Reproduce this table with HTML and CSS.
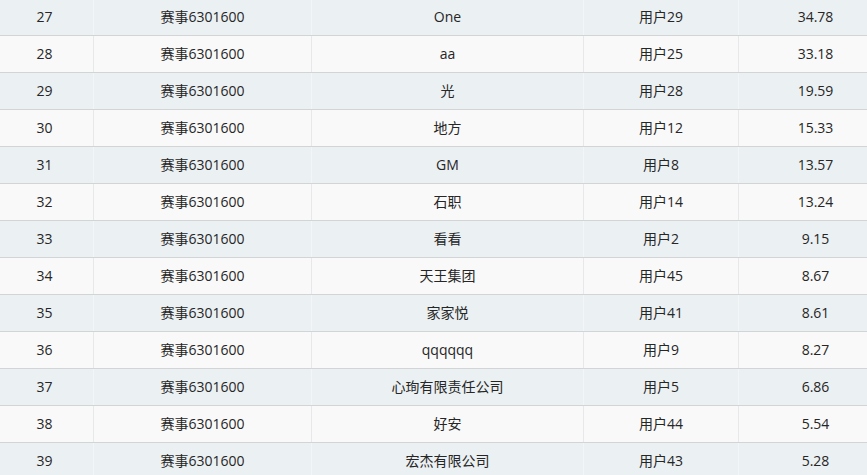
FILE: index.html
```html
<!DOCTYPE html>
<html lang="zh">
<head>
<meta charset="utf-8">
<title>排行</title>
<link rel="stylesheet" href="styles.css">
</head>
<body>
<div class="table">
  <div class="row odd"><div class="cell">27</div><div class="cell">赛事6301600</div><div class="cell">One</div><div class="cell">用户29</div><div class="cell">34.78</div></div>
  <div class="row even"><div class="cell">28</div><div class="cell">赛事6301600</div><div class="cell">aa</div><div class="cell">用户25</div><div class="cell">33.18</div></div>
  <div class="row odd"><div class="cell">29</div><div class="cell">赛事6301600</div><div class="cell">光</div><div class="cell">用户28</div><div class="cell">19.59</div></div>
  <div class="row even"><div class="cell">30</div><div class="cell">赛事6301600</div><div class="cell">地方</div><div class="cell">用户12</div><div class="cell">15.33</div></div>
  <div class="row odd"><div class="cell">31</div><div class="cell">赛事6301600</div><div class="cell">GM</div><div class="cell">用户8</div><div class="cell">13.57</div></div>
  <div class="row even"><div class="cell">32</div><div class="cell">赛事6301600</div><div class="cell">石职</div><div class="cell">用户14</div><div class="cell">13.24</div></div>
  <div class="row odd"><div class="cell">33</div><div class="cell">赛事6301600</div><div class="cell">看看</div><div class="cell">用户2</div><div class="cell">9.15</div></div>
  <div class="row even"><div class="cell">34</div><div class="cell">赛事6301600</div><div class="cell">天王集团</div><div class="cell">用户45</div><div class="cell">8.67</div></div>
  <div class="row odd"><div class="cell">35</div><div class="cell">赛事6301600</div><div class="cell">家家悦</div><div class="cell">用户41</div><div class="cell">8.61</div></div>
  <div class="row even"><div class="cell">36</div><div class="cell">赛事6301600</div><div class="cell">qqqqqq</div><div class="cell">用户9</div><div class="cell">8.27</div></div>
  <div class="row odd"><div class="cell">37</div><div class="cell">赛事6301600</div><div class="cell">心珣有限责任公司</div><div class="cell">用户5</div><div class="cell">6.86</div></div>
  <div class="row even"><div class="cell">38</div><div class="cell">赛事6301600</div><div class="cell">好安</div><div class="cell">用户44</div><div class="cell">5.54</div></div>
  <div class="row odd"><div class="cell">39</div><div class="cell">赛事6301600</div><div class="cell">宏杰有限公司</div><div class="cell">用户43</div><div class="cell">5.28</div></div>
</div>
</body>
</html>
```

FILE: styles.css
```css
html, body {
  margin: 0;
  padding: 0;
  overflow: hidden;
  background: #ffffff;
}

body {
  font-family: "Open Sans", "Noto Sans CJK SC", sans-serif;
  font-size: 14px;
  color: #262626;
}

.table {
  margin-top: -1px;
  margin-left: -4px;
  width: 896px;
}

.row {
  display: grid;
  grid-template-columns: 98px 218px 272px 155px 153px;
  height: 37px;
  box-sizing: border-box;
  border-bottom: 1px solid #d2d4d6;
}

.row.odd {
  background: #ebf0f3;
}

.row.even {
  background: #f9f9f9;
}

.cell {
  box-sizing: border-box;
  border-right: 1px solid #e6e8ea;
  display: flex;
  align-items: center;
  justify-content: center;
  white-space: nowrap;
  padding-bottom: 2px;
}

.row.odd .cell {
  border-right-color: #f3f6f8;
}

.cell:last-child {
  border-right: none;
}
```
